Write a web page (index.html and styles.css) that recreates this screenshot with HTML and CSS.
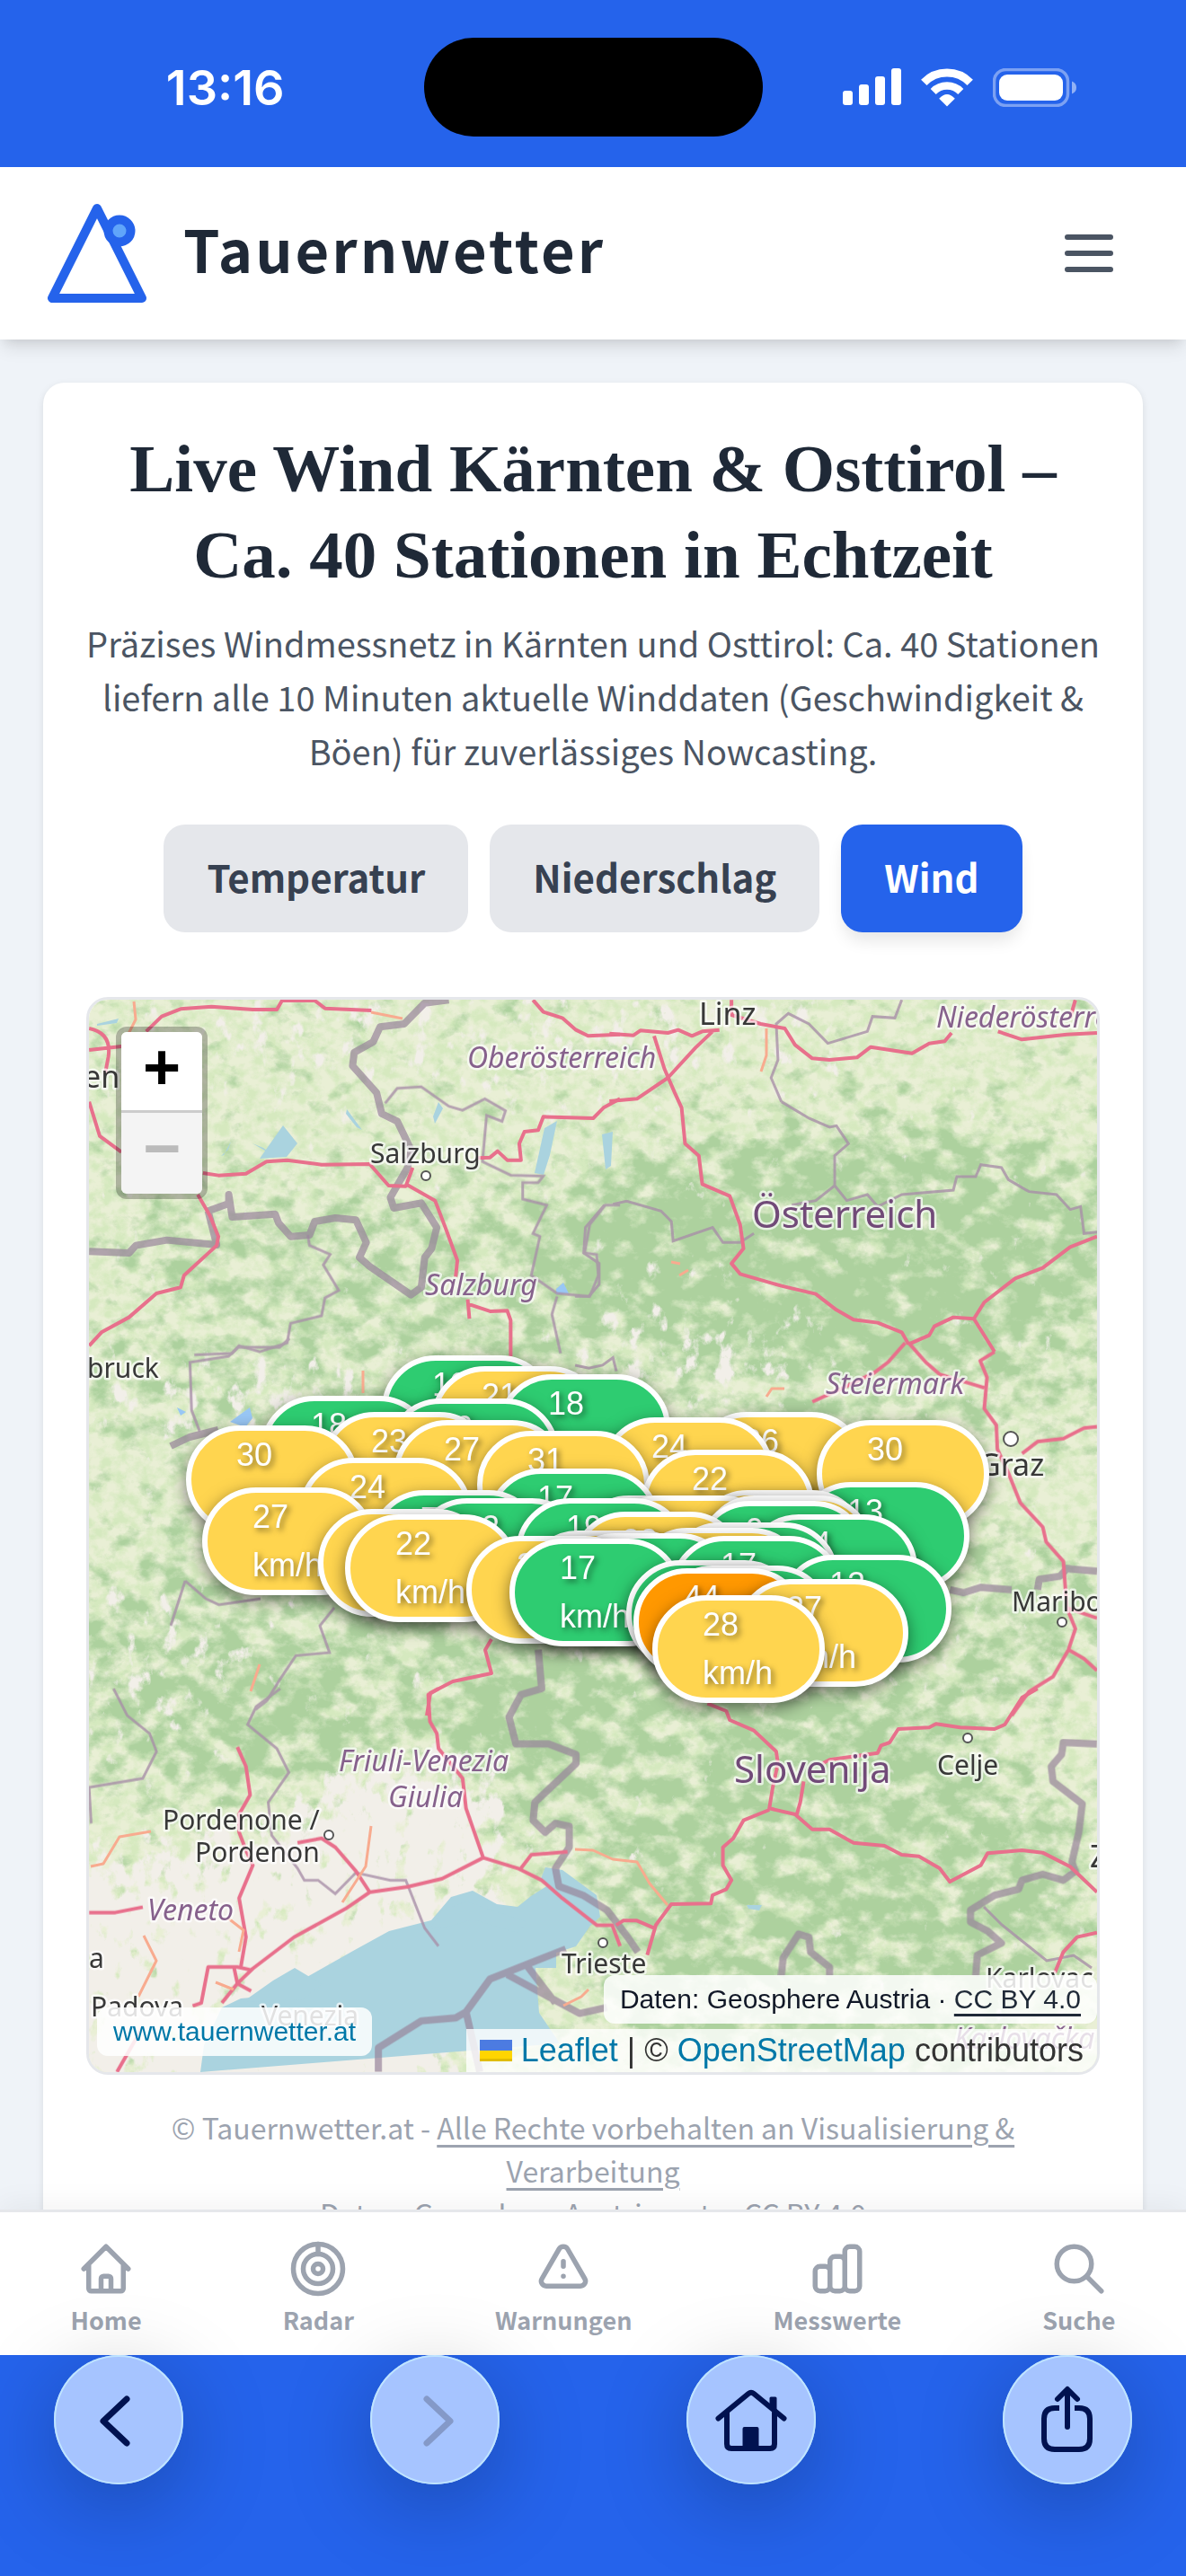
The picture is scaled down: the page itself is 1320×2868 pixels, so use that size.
FILE: index.html
```html
<!DOCTYPE html>
<html lang="de">
<head>
    <meta charset="UTF-8">
    <meta name="viewport" content="width=device-width, initial-scale=1.0">
    <title>Tauernwetter – Live Wind</title>
    <link rel="stylesheet" href="styles.css">
</head>
<body>
    <div class="status-bar">
        <div class="status-time">13:16</div>
        <div class="island"></div>
        <div class="status-icons">
            <svg width="65" height="42" viewBox="0 0 65 42" fill="#fff">
                <rect x="0" y="25" width="11" height="16" rx="3"/>
                <rect x="18" y="18" width="11" height="23" rx="3"/>
                <rect x="36" y="9" width="11" height="32" rx="3"/>
                <rect x="54" y="0" width="11" height="41" rx="3"/>
            </svg>
            <svg width="58" height="43" viewBox="0 0 58 43" fill="none" stroke="#fff" stroke-width="9">
                <path d="M3.3 15.8a36 36 0 0 1 51.4 0"/>
                <path d="M13.7 25.9a21.5 21.5 0 0 1 30.6 0" stroke-width="8.5"/>
                <path d="M29 42.500l-8.800-8.800q8.800-9.400 17.600 0z" fill="#fff" stroke="none"/>
            </svg>
            <svg width="94" height="43" viewBox="0 0 94 43" fill="none">
                <rect x="1.500" y="1.500" width="82" height="40" rx="13" stroke="#fff" stroke-opacity=".4" stroke-width="3.500"/>
                <rect x="7" y="7" width="71" height="29" rx="9" fill="#fff"/>
                <path d="M88 14.500q5 2 5 7t-5 7z" fill="#fff" fill-opacity=".5"/>
            </svg>
        </div>
    </div>

    <header class="header">
        <a class="brand" href="#">
            <svg class="logo" viewBox="0 0 120 120" fill="none" stroke="#2563eb" stroke-width="10" stroke-linejoin="round">
                <path d="M60 10L10 110h100z"/>
                <circle cx="85" cy="35" r="12.500" fill="#60a5fa"/>
            </svg>
            <span>Tauernwetter</span>
        </a>
        <button class="menu-button" aria-label="Menü">
            <svg viewBox="0 0 24 24"><path d="M4 6h16M4 12h16M4 18h16"/></svg>
        </button>
    </header>

    <main class="content">
        <section class="card">
            <h1>Live Wind Kärnten &amp; Osttirol – Ca. 40 Stationen in Echtzeit</h1>
            <p class="intro">Präzises Windmessnetz in Kärnten und Osttirol: Ca. 40 Stationen liefern alle 10 Minuten aktuelle Winddaten (Geschwindigkeit &amp; Böen) für zuverlässiges Nowcasting.</p>

            <div class="tabs">
                <button>Temperatur</button>
                <button>Niederschlag</button>
                <button class="active">Wind</button>
            </div>

            <div class="map">
                <svg class="map-tiles" viewBox="0 0 1122 1194" preserveAspectRatio="xMidYMid slice">
                    <defs>
                        <filter id="soft" x="-30%" y="-30%" width="160%" height="160%"><feGaussianBlur stdDeviation="28"/></filter>
                        <filter id="woods" x="0" y="0" width="100%" height="100%" color-interpolation-filters="sRGB">
                            <feTurbulence type="fractalNoise" baseFrequency=".035 .045" numOctaves="5" seed="7"/>
                            <feColorMatrix values="0 0 0 0 0  0 0 0 0 0  0 0 0 0 0  1 0 0 0 0" result="n"/>
                            <feComposite in="n" in2="SourceAlpha" operator="arithmetic" k2="1" k3="1" k4="-.5"/>
                            <feColorMatrix values="0 0 0 0 .678  0 0 0 0 .82  0 0 0 0 .62  0 0 0 3.500 -1.050"/>
                        </filter>
                        <filter id="meadow" x="0" y="0" width="100%" height="100%" color-interpolation-filters="sRGB">
                            <feTurbulence type="fractalNoise" baseFrequency=".07 .08" numOctaves="4" seed="21"/>
                            <feColorMatrix values="0 0 0 0 .82  0 0 0 0 .91  0 0 0 0 .73  0 3 0 0 -1.100"/>
                        </filter>
                        <filter id="rock" x="0" y="0" width="100%" height="100%" color-interpolation-filters="sRGB">
                            <feTurbulence type="fractalNoise" baseFrequency=".05 .035" numOctaves="5" seed="4"/>
                            <feColorMatrix values="0 0 0 0 0  0 0 0 0 0  0 0 0 0 0  1 0 0 0 0" result="n"/>
                            <feComposite in="n" in2="SourceAlpha" operator="arithmetic" k2="1" k3="1" k4="-.5"/>
                            <feColorMatrix values="0 0 0 0 .95  0 0 0 0 .937  0 0 0 0 .913  0 0 0 7 -2.900"/>
                        </filter>
                    </defs>

                    <!-- Gelände -->
                    <rect width="1122" height="1194" fill="#e9efd5"/>
                    <rect width="1122" height="1194" filter="url(#meadow)" opacity=".8"/>
                    <g filter="url(#woods)">
                        <rect width="1122" height="1194" fill-opacity=".22"/>
                        <g filter="url(#soft)">
                            <ellipse cx="850" cy="270" rx="330" ry="130" fill-opacity=".42"/>
                            <ellipse cx="340" cy="270" rx="330" ry="70" fill-opacity=".24"/>
                            <ellipse cx="560" cy="420" rx="620" ry="110" fill-opacity=".22"/>
                            <ellipse cx="560" cy="700" rx="620" ry="150" fill-opacity=".26"/>
                            <ellipse cx="830" cy="1010" rx="280" ry="220" fill-opacity=".36"/>
                            <ellipse cx="140" cy="820" rx="170" ry="80" fill-opacity=".28"/>
                            <ellipse cx="500" cy="830" rx="90" ry="110" fill-opacity=".3"/>
                        </g>
                    </g>
                    <g filter="url(#rock)">
                        <rect width="1122" height="1194" fill-opacity=".16"/>
                        <g filter="url(#soft)">
                            <ellipse cx="190" cy="440" rx="230" ry="46" fill-opacity=".26"/>
                            <ellipse cx="670" cy="390" rx="150" ry="55" fill-opacity=".28"/>
                            <ellipse cx="60" cy="730" rx="130" ry="80" fill-opacity=".2"/>
                            <ellipse cx="450" cy="40" rx="420" ry="70" fill-opacity=".22"/>
                            <path d="M-40 1240V960L200 930 300 850 450 850 470 1000 400 1240z" fill-opacity=".6"/>
                        </g>
                    </g>

                    <!-- Seen und Adria -->
                    <g fill="#aad3df">
                        <path d="M199 164l17-24 16 20-12 15-30 2zM506 195l-10-2 11-50 14-8-8 38zM573 150h9l-1 34-6 3zM9 27l24-6-2 5-22 3zM150 173l8-15-3 9-8 7zM287 122l17 23-6-3-12-15zM383 130l6-16 5 7-9 17zM571 150l12-3-2 38-6 4zM182 160l12 5 14 10z"/>
                        <path d="M124 1194l4-30 20-42 21-10 34-3 38-20 53-30 40-22 47-12 22-26 24-7 27 15 23 3 15-12 19-12-9-5 6-15 19 3 38 28 4 24-11 10-16 23-22 7v17l-23 0 4 50 23 34z"/>
                        <path d="M171 1116l34-24 24-14 30 18-21 17zM379 1035l14-21 27-10 68 23-11 12-50-15-23 7zM732 1008h17l-3 6-12-2z"/>
                    </g>
                    <g fill="#99c7f5"><path d="M520 322l8-7 6 12-14 1zM98 454l10 5-6 4zM157 470l22-16 3 12-8 10z"/></g>

                    <!-- Grenzen -->
                    <g class="state-line">
                        <g transform="translate(-9 -13) scale(.3827 .3333)">
                            <path d="M885 385L920 335 990 330 1070 395 1110 408 1175 370 1235 410 1225 445 1180 425 1168 580 1250 625 1345 628 1330 650 1285 650 1285 705 1355 725 1315 820 1335 830 1310 960 1385 1020 1480 1030 1505 960 1500 890 1465 885 1480 790 1525 725 1568 725M1385 1030L1370 1090 1395 1220M660 825L665 860 725 890 705 925 750 1010 710 1035 700 1095 610 1120 600 1185 520 1215 460 1195 440 1220 330 1225"/>
                        </g>
                        <g transform="translate(541 -13) scale(.3827 .3333)">
                            <path d="M110 722L150 712 250 745 280 780 285 845 400 800 430 850 480 850 520 820M85 725L30 800 25 885 70 920 70 990 40 1030 0 1030M600 380L570 300 590 240 585 120 620 85 680 120 735 185 850 145 865 95 930 100 950 40M600 380L680 435 740 465 760 460 795 520 755 560 755 660 700 710 630 725M755 660L790 710 850 690 880 730 950 690 1100 675 1110 630 1165 630 1180 590 1240 600 1260 640 1320 680 1400 690 1440 740 1470 730 1480 820 1518 815M0 1260L40 1270 80 1260 110 1235 120 1280"/>
                        </g>
                        <g transform="translate(-9 767) scale(.3827 .3333)">
                            <path d="M95 0L135 90 200 150 220 210 180 300 24 330 30 450M580 0L510 60 485 120 570 200 605 280 545 380 555 490 630 600 650 640 690 640 740 685 800 615 900 640 945 640 1000 800 1040 860"/>
                        </g>
                        <g transform="translate(91 377) scale(.357 .3333)">
                            <path d="M370 0L340 30 210 30 180 60 60 80 65 240 90 310M45 810L0 960M45 810L110 870 150 890 280 870M510 900L465 960 495 1050 390 1060 340 1140 300 1210 265 1240"/>
                        </g>
                        <path d="M996 1010l20 20 25 20 25 20 30-6 20 14"/>
                    </g>
                    <g class="country-line">
                        <g transform="translate(-9 -13) scale(.3827 .3333)">
                            <path d="M1070 40L1000 50 940 120 870 130 850 180 795 215 790 260 860 350 875 420 920 445 960 540 950 600 900 700 910 735 990 718 1035 800 1020 870 1000 900 990 1000 960 1025 840 930 810 900 830 850 800 775 740 768 680 780 665 825 610 830 575 785 565 755 440 765 430 690 430 720 370 745M24 880L140 885 160 860 250 842 395 858 370 745"/>
                        </g>
                        <path d="M91 497l21-10 32-8"/>
                        <g transform="translate(-9 767) scale(.3827 .3333)">
                            <path d="M1330 -130L1340 0 1280 20 1245 95 1265 185 1360 185 1440 220 1440 250 1320 380 1315 440 1350 480 1380 450 1420 460 1420 530 1380 600 1390 660 1460 690 1530 740 1590 830 1620 880"/>
                            <path d="M865 1280L865 1200 990 1110 1090 1100 1120 1080 1190 970 1300 920 1410 870M1120 1080L1160 1280M1240 955L1450 1085 1530 1065M1300 930L1380 1050"/>
                        </g>
                        <g transform="translate(541 377) scale(.3827 .3333)">
                            <path d="M1090 840L1130 850 1180 832 1270 840M1345 840L1350 805 1410 795 1430 770 1518 778"/>
                        </g>
                        <g transform="translate(541 767) scale(.3827 .3333)">
                            <path d="M1518 185L1420 180 1415 220 1385 260 1390 310 1475 385 1465 480 1445 580 1455 610 1420 640 1360 620 1300 640 1290 670 1220 690 1150 740 1150 780 1200 810 1240 850 1170 890 1165 960M600 960L605 900 650 820 680 830 685 880 740 930 740 960"/>
                        </g>
                    </g>

                    <!-- Straßen -->
                    <g class="road">
                        <g transform="translate(-9 -13) scale(.3827 .3333)">
                            <path d="M190 145L235 95 290 70 380 62 500 72 570 72 585 42 680 42 710 68 845 75M24 135Q90 150 80 230L70 290M24 207L118 195M24 380L55 495 118 548M355 618L400 626 480 620 540 580 600 575 700 590 840 588 895 660 945 662 965 600M945 655L1030 710 1060 800 1095 910 1090 965M340 690L375 760 400 830 395 860 300 960 290 1000 220 1020 140 1100 60 1150 24 1195M1125 1040L1130 1105M1125 1055L1190 1080 1240 1078 1250 1110 1250 1230M1155 568L1190 566 1212 545 1240 575 1280 575 1275 520 1290 480 1330 475 1345 430 1490 435 1520 400 1568 370M1315 40L1345 80 1400 100 1440 140 1475 160 1568 155"/>
                        </g>
                        <g transform="translate(541 -13) scale(.3827 .3333)">
                            <path d="M100 152L170 158 190 142 270 150 300 140 340 160 370 145 420 140M400 145L350 200 270 300M230 160L260 270 290 350 310 400 320 520 360 560 370 655 450 695 480 790 490 870 455 920 480 955 600 995 700 1022 760 1075 810 1108 880 1118 950 1150 970 1190M270 300L180 370 100 378M455 40L455 90 540 120 610 135 640 190 690 235 740 240 820 232 860 197 980 218 1030 185 1075 178 1095 150M1230 145L1300 172 1430 155 1518 150M1455 40L1440 100M970 1190L1030 1160 1045 1130 1100 1100 1160 1105 1190 1050 1280 970 1360 935 1440 865 1518 830M1160 1105L1220 1215"/>
                        </g>
                        <g transform="translate(541 377) scale(.3827 .3333)">
                            <path d="M1220 45L1178 75 1198 130 1190 235 1225 290 1228 370 1260 450 1295 550 1360 630 1370 680 1420 745 1430 900 1455 970 1435 1040 1390 1130 1320 1180 1270 1260M960 15L910 80 870 115 780 165 690 212M970 15L1020 80 1060 120 1190 165M1300 385L1345 345 1420 335 1480 300 1518 295M1430 900L1518 935M1435 1040L1480 1070 1518 1110"/>
                        </g>
                        <path d="M448 712l-7 12 7 26-43 9-25 13-4 25"/>
                        <g transform="translate(-9 767) scale(.3827 .3333)">
                            <path d="M1040 0L1010 20 1015 110 1035 150 1040 200 1110 300 1120 400 1170 565 1050 635 950 662 840 680 770 735 620 830 500 935 455 985 410 1050M455 195L480 260 492 355 460 420 460 480 480 540 500 590 460 700 480 830 465 930M495 940L455 930 370 930 350 1050 325 1060M495 1010L455 985 445 930M180 1130L105 1280M24 748L100 748 180 730M840 680L800 610 740 530 700 500 630 515M1170 565L1270 600 1340 640 1400 700 1500 790 1545 790 1568 860M1280 600L1310 555 1415 545"/>
                        </g>
                        <g transform="translate(541 767) scale(.3827 .3333)">
                            <path d="M385 50L440 75 450 105 520 140 585 210 590 250 575 330 565 400 640 420 690 470 740 470 810 515 900 525 950 555 1000 560 1060 600 1090 645 1180 590 1200 550 1300 540 1360 548 1440 595 1518 680M565 405L490 440 460 500 430 530 430 590 455 640 440 670 400 690 395 718 280 720 235 790 210 890M665 310L655 380 645 420M720 250L740 238 880 215 890 190 915 180 940 135 1030 130 1050 118 1120 130 1220 135 1250 120 1300 30 1345 0M120 790L140 775 180 775 230 800M1395 950L1420 880 1460 830 1518 815"/>
                        </g>
                    </g>
                    <g class="road minor">
                        <path d="M50 2l2 20-8 16M314 14l35 7M754 32v30l-6 18M648 292l10 2M657 307l10-6M305 413l0 25M314 920l-6 45-26 40M2 965l14-3 18-30 35-6M141 1094l20 8M167 1060l5-24-18-14M55 1110l20-40-14-28M528 1120l20-10 8-8M541 946l20 1 22 10 27 3 14 24 20 24M180 770l10-30M754 442l6-9h14"/>
                    </g>

                    <g class="towns">
                        <circle cx="375" cy="196" r="5"/><circle cx="1026" cy="489" r="8"/><circle cx="1083" cy="693" r="5"/>
                        <circle cx="978" cy="822" r="5"/><circle cx="267" cy="930" r="5"/><circle cx="572" cy="1050" r="5"/>
                    </g>
                    <g class="place">
                        <text x="313" y="182">Salzburg</text>
                        <text class="city" x="679" y="28">Linz</text>
                        <text class="city" x="-27" y="98">hen</text>
                        <text x="-2" y="421">bruck</text>
                        <text class="city" x="990" y="530">Graz</text>
                        <text x="1027" y="681">Maribor</text>
                        <text x="944" y="863">Celje</text>
                        <text x="82" y="924">Pordenone /</text>
                        <text x="118" y="960">Pordenon</text>
                        <text x="526" y="1084">Trieste</text>
                        <text x="0" y="1078">a</text>
                        <text x="2" y="1132">Padova</text>
                        <text x="192" y="1142">Venezia</text>
                        <text x="998" y="1100">Karlovac</text>
                        <text class="city" x="1114" y="966">Z</text>
                    </g>
                    <g class="region">
                        <text x="421" y="76">Oberösterreich</text>
                        <text x="943" y="31">Niederösterreich</text>
                        <text x="374" y="329">Salzburg</text>
                        <text x="820" y="439">Steiermark</text>
                        <text x="278" y="859">Friuli-Venezia</text>
                        <text x="333" y="899">Giulia</text>
                        <text x="65" y="1025">Veneto</text>
                        <text x="963" y="1168">Karlovačka</text>
                    </g>
                    <g class="country">
                        <text x="738" y="254">Österreich</text>
                        <text x="718" y="872">Slovenija</text>
                    </g>
                </svg>

                <div class="markers" id="markers"></div>

                <div class="zoom-control">
                    <button aria-label="Vergrößern">+</button>
                    <button aria-label="Verkleinern" disabled>−</button>
                </div>
                <a class="watermark" href="#">www.tauernwetter.at</a>
                <div class="map-credits">
                    <div class="source">Daten: Geosphere Austria · <a href="#">CC BY 4.0</a></div>
                    <div class="attribution">
                        <a href="#"><svg width="36" height="24" viewBox="0 0 12 8"><path fill="#4c7be1" d="M0 0h12v4H0z"/><path fill="#ffd500" d="M0 4h12v3H0z"/><path fill="#e0bc00" d="M0 7h12v1H0z"/></svg> Leaflet</a> | © <a href="#">OpenStreetMap</a> contributors
                    </div>
                </div>
            </div>

            <p class="copyright">© Tauernwetter.at - <a href="#">Alle Rechte vorbehalten an Visualisierung &amp; Verarbeitung</a><br>Daten: Geosphere Austria unter CC BY 4.0</p>
        </section>
    </main>

    <nav class="tab-bar">
        <a href="#"><svg viewBox="0 0 24 24"><path d="M3 12l2-2m0 0l7-7 7 7M5 10v10a1 1 0 001 1h3m10-11l2 2m-2-2v10a1 1 0 01-1 1h-3m-6 0a1 1 0 001-1v-4a1 1 0 011-1h2a1 1 0 011 1v4a1 1 0 001 1m-6 0h6"/></svg>Home</a>
        <a href="#"><svg viewBox="0 0 24 24"><circle cx="12" cy="12" r="10"/><circle cx="12" cy="12" r="6"/><circle cx="12" cy="12" r="2"/><path d="M12 2v4"/></svg>Radar</a>
        <a href="#"><svg viewBox="0 0 24 24"><path d="M12 9v2m0 4h.01m-6.938 4h13.856c1.540 0 2.502-1.667 1.732-3L13.732 4c-.770-1.333-2.694-1.333-3.464 0L3.340 16c-.770 1.333.192 3 1.732 3z"/></svg>Warnungen</a>
        <a href="#"><svg viewBox="0 0 24 24"><path d="M9 19v-6a2 2 0 00-2-2H5a2 2 0 00-2 2v6a2 2 0 002 2h2a2 2 0 002-2zm0 0V9a2 2 0 012-2h2a2 2 0 012 2v10m-6 0a2 2 0 002 2h2a2 2 0 002-2m0 0V5a2 2 0 012-2h2a2 2 0 012 2v14a2 2 0 01-2 2h-2a2 2 0 01-2-2z"/></svg>Messwerte</a>
        <a href="#"><svg viewBox="0 0 24 24"><path d="M21 21l-6-6m2-5a7 7 0 11-14 0 7 7 0 0114 0z"/></svg>Suche</a>
    </nav>

    <div class="toolbar">
        <button aria-label="Zurück"><svg viewBox="0 0 144 144"><path d="M81 49L55 73.500 81 98" stroke-width="7"/></svg></button>
        <button aria-label="Vor" disabled><svg viewBox="0 0 144 144"><path d="M63 49L89 73.500 63 98" stroke-width="7"/></svg></button>
        <button aria-label="Startseite"><svg viewBox="0 0 144 144"><path d="M35.500 70.500L69 43q3-2.500 6 0l33.500 27.500M45 64v35q0 5 5 5h43q5 0 5-5V64"/><path d="M92.500 60V48q0-1.500 1.500-1.500h5q1.500 0 1.500 1.500v18zM62.500 105V82q0-2 2-2h14q2 0 2 2v23z" fill="#001250" stroke="none"/></svg></button>
        <button aria-label="Teilen"><svg viewBox="0 0 144 144"><path d="M61 49l11-11 11 11M72 39v41"/><path d="M63 59h-5q-12 0-12 12v22q0 12 12 12h27q12 0 12-12V71q0-12-12-12h-5" stroke-linecap="butt"/></svg></button>
    </div>

    <script>
        // Windmittel je Station: [x, y, km/h], Position im Kartenausschnitt
        const stations = [
            [326, 396, 19], [381, 408, 21], [455, 417, 18], [191, 441, 18], [331, 444, 16],
            [258, 459, 23], [672, 459, 26], [570, 465, 24], [339, 468, 27], [810, 468, 30],
            [108, 474, 30], [432, 480, 31], [615, 501, 22], [234, 510, 24], [443, 522, 17],
            [788, 537, 13], [126, 543, 27], [313, 546, 7], [673, 546, 21], [541, 552, 17],
            [574, 552, 25], [681, 552, 22], [361, 555, 12], [475, 555, 19], [675, 558, 9],
            [255, 567, 23], [537, 570, 20], [285, 573, 22], [730, 573, 14], [642, 582, 16],
            [606, 588, 21], [484, 591, 24], [526, 594, 15], [420, 597, 23], [647, 597, 17],
            [468, 600, 17], [768, 618, 12], [598, 624, 11], [634, 630, 18], [606, 633, 44],
            [720, 645, 27], [627, 663, 28]
        ];

        function windClass(speed) {
            if (speed >= 40) return 'storm';
            return speed >= 20 ? 'fresh' : 'light';
        }

        const markers = document.getElementById('markers');
        stations.forEach(([x, y, speed]) => {
            const marker = document.createElement('div');
            marker.className = 'marker ' + windClass(speed);
            marker.style.left = x / 11.22 + '%';
            marker.style.top = y + 'px';
            marker.textContent = speed + ' km/h';
            markers.appendChild(marker);
        });
    </script>
</body>
</html>
```

FILE: styles.css
```css
* {
    box-sizing: border-box;
}

body {
    display: flex;
    flex-direction: column;
    height: 100vh;
    margin: 0;
    overflow: hidden;
    background-color: #eff3f8;
    color: #1f2937;
    font-family: "Noto Sans CJK SC", "Noto Sans", sans-serif;
}

button {
    padding: 0;
    border: none;
    font-family: inherit;
    cursor: pointer;
}

svg {
    display: block;
}

/* Statusleiste */
.status-bar {
    display: grid;
    grid-template-columns: 1fr auto 1fr;
    align-items: center;
    flex: none;
    height: 186px;
    padding-top: 8px;
    background-color: #2563eb;
}

.status-time {
    padding-left: 30px;
    color: #fff;
    font-family: Inter, sans-serif;
    font-size: 54px;
    font-weight: 600;
    text-align: center;
}

.island {
    width: 377px;
    height: 110px;
    border-radius: 55px;
    background-color: #000;
}

.status-icons {
    display: flex;
    justify-content: center;
    align-items: center;
    gap: 22px;
    padding-right: 32px;
}

/* Kopfzeile */
.header {
    display: flex;
    justify-content: space-between;
    align-items: center;
    flex: none;
    position: relative;
    z-index: 1;
    height: 192px;
    padding: 0 48px;
    background-color: #fff;
    box-shadow: 0 12px 18px -3px rgba(0, 0, 0, 0.1), 0 6px 12px -6px rgba(0, 0, 0, 0.1);
}

.brand {
    display: flex;
    align-items: center;
    gap: 36px;
    color: #1f2937;
    font-size: 65px;
    font-weight: 700;
    line-height: 84px;
    letter-spacing: 3px;
    text-decoration: none;
}

.brand span {
    padding-bottom: 12px;
}

.logo {
    width: 120px;
    height: 120px;
}

.menu-button {
    padding: 24px;
    background: none;
}

.menu-button svg {
    width: 72px;
    height: 72px;
    fill: none;
    stroke: #4b5563;
    stroke-width: 2;
    stroke-linecap: round;
}

/* Inhalt */
.content {
    flex: 1;
    min-height: 0;
    padding: 48px;
    overflow: hidden;
}

.card {
    padding: 48px;
    border-radius: 24px;
    background-color: #fff;
    box-shadow: 0 3px 9px rgba(0, 0, 0, 0.1);
    text-align: center;
}

h1 {
    margin: 0 0 20px;
    font-family: "Liberation Serif", serif;
    font-size: 75px;
    font-weight: 700;
    line-height: 96px;
}

.intro {
    margin: 0 0 52px;
    color: #4b5563;
    font-size: 38px;
    line-height: 60px;
}

.tabs {
    display: flex;
    justify-content: center;
    gap: 24px;
    margin-bottom: 72px;
}

.tabs button {
    height: 120px;
    padding: 0 48px 6px;
    border-radius: 24px;
    background-color: #e5e7eb;
    color: #374151;
    font-size: 42px;
    font-weight: 700;
}

.tabs .active {
    background-color: #2563eb;
    color: #fff;
    box-shadow: 0 12px 18px -3px rgba(0, 0, 0, 0.1);
}

/* Karte */
.map {
    position: relative;
    height: 1200px;
    border: 3px solid #e5e7eb;
    border-radius: 24px;
    overflow: hidden;
    font-family: "Liberation Sans", Arial, sans-serif;
    text-align: left;
}

.map-tiles {
    width: 100%;
    height: 100%;
    font-family: "Noto Sans", sans-serif;
}

.map-tiles path {
    vector-effect: non-scaling-stroke;
}

.road {
    fill: none;
    stroke: #e8708c;
    stroke-width: 4;
    stroke-linejoin: round;
}

.road.minor {
    stroke: #f8ab8f;
    stroke-width: 3;
}

.state-line {
    fill: none;
    stroke: #a88fa8;
    stroke-width: 3;
    opacity: 0.8;
}

.country-line {
    fill: none;
    stroke: #98849b;
    stroke-width: 8;
    stroke-linejoin: round;
    opacity: 0.7;
}

.towns {
    fill: #fff;
    stroke: #555;
    stroke-width: 2;
}

.place,
.region,
.country {
    paint-order: stroke;
    stroke: rgba(255, 255, 255, 0.7);
    stroke-width: 5;
    stroke-linejoin: round;
}

.place {
    fill: #383838;
    font-size: 30px;
}

.place .city {
    font-size: 34px;
}

.region {
    fill: #86618c;
    font-size: 32px;
    font-style: italic;
}

.country {
    fill: #714a78;
    font-size: 42px;
}

.markers {
    position: absolute;
    inset: 0;
}

.marker {
    position: absolute;
    width: 192px;
    height: 120px;
    padding: 0 50px;
    border: 6px solid #fff;
    border-radius: 60px;
    box-shadow: 0 6px 18px rgba(0, 0, 0, 0.5);
    color: #fff;
    font-size: 36px;
    line-height: 54px;
    text-shadow: 3px 3px 6px rgba(0, 0, 0, 0.5);
}

.marker.light {
    background-color: #2ecc71;
}

.marker.fresh {
    background-color: #ffd54f;
}

.marker.storm {
    background-color: #ff9800;
}

.zoom-control {
    position: absolute;
    top: 30px;
    left: 30px;
    width: 102px;
    border: 6px solid rgba(0, 0, 0, 0.25);
    border-radius: 12px;
    background-clip: padding-box;
}

.zoom-control button {
    display: block;
    width: 90px;
    height: 90px;
    border-radius: 0 0 6px 6px;
    background-color: #fff;
    color: #000;
    font-family: "Liberation Mono", monospace;
    font-size: 72px;
    font-weight: 700;
    line-height: 90px;
}

.zoom-control button:first-child {
    border-bottom: 3px solid #ccc;
    border-radius: 6px 6px 0 0;
}

.zoom-control button:disabled {
    background-color: #f4f4f4;
    color: #bbb;
}

.watermark {
    position: absolute;
    left: 9px;
    bottom: 18px;
    padding: 0 18px;
    border-radius: 12px;
    background-color: rgba(255, 255, 255, 0.85);
    color: #0078a8;
    font-size: 30px;
    line-height: 54px;
    text-decoration: none;
}

.map-credits {
    position: absolute;
    right: 0;
    bottom: 0;
    display: flex;
    flex-direction: column;
    align-items: flex-end;
    gap: 6px;
}

.source {
    padding: 0 18px;
    border-radius: 12px;
    background-color: rgba(255, 255, 255, 0.85);
    color: #111827;
    font-size: 30px;
    line-height: 54px;
}

.source a {
    color: #1f2937;
    text-underline-offset: 6px;
}

.attribution {
    padding: 0 15px;
    background-color: rgba(255, 255, 255, 0.8);
    color: #333;
    font-size: 36px;
    line-height: 48px;
    white-space: nowrap;
}

.attribution a {
    color: #0078a8;
    text-decoration: none;
}

.attribution svg {
    display: inline;
}

.copyright {
    margin: 34px 0 0;
    color: #9ca3af;
    font-size: 32px;
    line-height: 48px;
}

.copyright a {
    color: inherit;
    text-underline-offset: 6px;
}

/* Navigation unten */
.tab-bar {
    display: flex;
    justify-content: space-around;
    flex: none;
    position: relative;
    height: 162px;
    padding-top: 30px;
    border-top: 3px solid #e5e7eb;
    background-color: #fff;
    box-shadow: 0 -6px 30px rgba(0, 0, 0, 0.05);
}

.tab-bar a {
    display: flex;
    flex-direction: column;
    align-items: center;
    gap: 4px;
    color: #9ca3af;
    font-size: 27px;
    font-weight: 700;
    line-height: 40px;
    text-decoration: none;
}

.tab-bar svg {
    width: 66px;
    height: 66px;
    fill: none;
    stroke: currentColor;
    stroke-width: 2;
    stroke-linecap: round;
    stroke-linejoin: round;
}

.toolbar {
    display: flex;
    justify-content: space-between;
    align-items: flex-start;
    flex: none;
    position: relative;
    height: 246px;
    padding: 0 60px;
    background-color: #2563eb;
}

.toolbar button {
    width: 144px;
    height: 144px;
    border-radius: 50%;
    background-color: #a6c4ff;
    box-shadow: inset 0 0 0 2px #bfe4ff, 0 24px 96px rgba(0, 0, 0, 0.25);
    color: #001250;
}

.toolbar button:disabled {
    color: #8499c8;
}

.toolbar svg {
    fill: none;
    stroke: currentColor;
    stroke-width: 6;
    stroke-linecap: round;
    stroke-linejoin: round;
}
```
